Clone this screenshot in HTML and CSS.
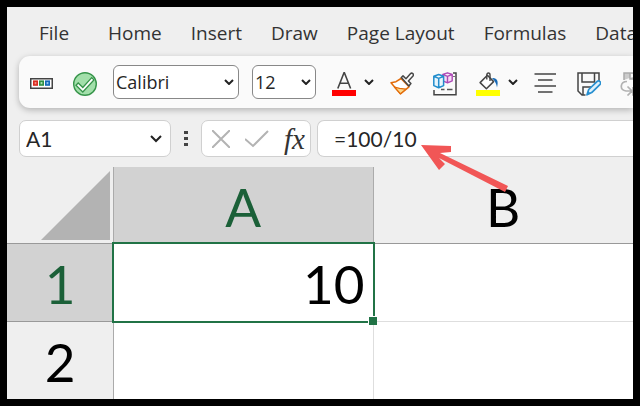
FILE: index.html
```
<!DOCTYPE html>
<html lang="en">

<head>
  <meta charset="UTF-8">
  <meta name="viewport" content="width=device-width, initial-scale=1.0">
  <title>Spreadsheet</title>

  <link rel="stylesheet" href="styles.css">
</head>

<body>
  <nav class="tabs">
    <a class="tab tab-file" href="#">File</a>
    <a class="tab" href="#">Home</a>
    <a class="tab" href="#">Insert</a>
    <a class="tab" href="#">Draw</a>
    <a class="tab" href="#">Page Layout</a>
    <a class="tab" href="#">Formulas</a>
    <a class="tab" href="#">Data</a>
  </nav>

  <div class="toolbar">
    <div class="group">
      <button class="tool" aria-label="Controls">
        <svg class="icon" viewBox="0 0 24 24">
          <rect x="0.75" y="6.75" width="21.5" height="9.5" fill="#fff" stroke="#444" stroke-width="1.5" />
          <rect x="3.8" y="9.2" width="3.4" height="3.8" fill="#f58b80" stroke="#d92c20" stroke-width="1.6" />
          <rect x="9.8" y="9.2" width="3.4" height="3.8" fill="#a6dcae" stroke="#2e8f43" stroke-width="1.6" />
          <rect x="15.8" y="9.2" width="3.4" height="3.8" fill="#8fc5ef" stroke="#1468b8" stroke-width="1.6" />
        </svg>
      </button>
      <button class="tool" aria-label="Accept">
        <svg class="icon" viewBox="0 0 24 24">
          <circle cx="12" cy="12" r="11.3" fill="#a2dfaa" stroke="#36944a" stroke-width="1.4" />
          <path d="M3 13.2l2.2-2.2 4.6 4.5L18.7 5.6l2.2 2.3L9.8 20z" fill="#fff" stroke="#36944a" stroke-width="1.3" />
        </svg>
      </button>
    </div>

    <div class="group group-fonts">
      <div class="picker picker-font">
        <select aria-label="Font">
          <option>Calibri</option>
        </select>
        <svg class="chevron" viewBox="0 0 10 6"><path d="M1 1l4 4 4-4" /></svg>
      </div>
      <div class="picker picker-size">
        <select aria-label="Font size">
          <option>12</option>
        </select>
        <svg class="chevron" viewBox="0 0 10 6"><path d="M1 1l4 4 4-4" /></svg>
      </div>
    </div>

    <button class="tool tool-menu" aria-label="Font color">
      <svg class="icon" viewBox="0 0 24 24">
        <path d="M5.8 16.5L12 .8h.4l6.2 15.7M8 11.2h8.4" fill="none" stroke="#444" stroke-width="1.6" />
        <path d="M0 18h24v6H0z" fill="#f00" />
      </svg>
      <svg class="chevron" viewBox="0 0 10 6"><path d="M1 1l4 4 4-4" /></svg>
    </button>

    <div class="group">
      <button class="tool" aria-label="Format painter">
        <svg class="icon" viewBox="0 0 24 24">
          <path d="M1 10.7l5-1 5-3.2 8 8.3-8.6 7z" fill="#fff" stroke="#e36c0a" stroke-width="1.5" stroke-linejoin="round" />
          <path d="M4.4 15l5.2 1.3 6.3.8-5.4 4.7z" fill="#fbd88c" stroke="#e36c0a" stroke-width="1.2" stroke-linejoin="round" />
          <path d="M11.3 5.5l1.7-1.6 3 2.9 4.4-5c1.5-1.7 4 .4 2.6 2.2l-4.6 4.9 2.5 2.7-2 2.4z" fill="#fff" stroke="#484848" stroke-width="1.5" stroke-linejoin="round" />
        </svg>
      </button>
      <button class="tool" aria-label="Group objects">
        <svg class="icon" viewBox="0 0 24 24">
          <path d="M20 1h3v21.7H1V18M21 4v1" fill="none" stroke="#444" stroke-width="1.5" />
          <path d="M8 17.5h3.5m2.5 0h5.5" fill="none" stroke="#555" stroke-width="1.3" />
          <path d="M14.5.8l4.7 1.6v6.4l-4.7 2-4.7-2V2.4zM9.8 2.4l4.7 1.9 4.7-1.9M14.5 4.3v6.5" fill="#f4dff5" stroke="#ad49b6" stroke-width="1.4" stroke-linejoin="round" />
          <path d="M5.7 2.5l4.9 1.8v9.3l-4.9 2.2-4.9-2.2V4.3zM.8 4.3l4.9 2.1 4.9-2.1M5.7 6.4v9.4" fill="#e8f5fd" stroke="#228dcc" stroke-width="1.5" stroke-linejoin="round" />
        </svg>
      </button>
      <button class="tool tool-menu" aria-label="Fill color">
        <svg class="icon" viewBox="0 0 24 24">
          <path d="M4.1 10.6l7.3-7.3 6.2 6.3-7.2 7.1z" fill="#fff" stroke="#444" stroke-width="1.5" stroke-linejoin="round" />
          <path d="M10.8 7.4V3c0-2.7 3.2-2.7 3.2 0v6" fill="none" stroke="#444" stroke-width="1.4" />
          <path d="M16 6c5-.6 6.8 3 5 9.4-.5-3-1.2-5.2-5-9.4z" fill="#1769b5" />
          <path d="M0 18h24v6H0z" fill="#ff0" />
        </svg>
        <svg class="chevron" viewBox="0 0 10 6"><path d="M1 1l4 4 4-4" /></svg>
      </button>
    </div>

    <div class="group">
      <button class="tool" aria-label="Center">
        <svg class="icon" viewBox="0 0 24 24">
          <path d="M.5 2h21.500M4 8h14.500M.5 14h21.500M4 20h14.500" fill="none" stroke="#444" stroke-width="1.5" />
        </svg>
      </button>
      <button class="tool" aria-label="Save as">
        <svg class="icon" viewBox="0 0 24 24">
          <path d="M22 9.5V1H1v18l4 4h3.5M5 1v9h12.5V1M6 22.5V15h8" fill="none" stroke="#444" stroke-width="1.5" />
          <path d="M10 22.8l1.7-5.3 8.5-8.2c1.7-1.5 4.5 1 2.9 3l-8.4 8.3z" fill="#dff1fc" stroke="#278fd0" stroke-width="1.7" stroke-linejoin="round" />
          <path d="M10 22.8l1.2-3.7 2.4 2.3z" fill="#278fd0" />
        </svg>
      </button>
      <button class="tool" aria-label="Repeat" disabled>
        <svg class="icon" viewBox="0 0 24 24">
          <path d="M4 8V1h20M10 1v6h14" fill="#ccc" stroke="#aaa" stroke-width="1.5" />
          <path d="M7 9.5c-7 0-7.8 8.500-1 9.500h5M7.500 14.500l4.500 4.500-4.500 4.500M13 15v8h10" fill="none" stroke="#b2b2b2" stroke-width="1.7" />
        </svg>
      </button>
    </div>
  </div>

  <div class="formula-bar">
    <div class="name-box">
      <input type="text" value="A1" aria-label="Name box">
      <button class="tool" aria-label="Show names">
        <svg class="chevron chevron-large" viewBox="0 0 12 8"><path d="M1 1l5 5 5-5" /></svg>
      </button>
    </div>
    <svg class="handle" viewBox="0 0 4 16">
      <path d="M0 0h4v3H0zM0 6h4v3H0zM0 12h4v3H0z" fill="#444" />
    </svg>
    <div class="actions">
      <button class="tool" aria-label="Cancel">
        <svg class="mark" viewBox="0 0 18 18"><path d="M0 0l18 18M18 0L0 18" /></svg>
      </button>
      <button class="tool" aria-label="Enter">
        <svg class="mark mark-check" viewBox="0 0 24 18"><path d="M0 9l8 7L23 1" /></svg>
      </button>
      <button class="tool fx" aria-label="Insert function">fx</button>
    </div>
    <input class="formula" type="text" value="=100/10" aria-label="Formula">
  </div>

  <table class="sheet">
    <thead>
      <tr>
        <th class="corner">
          <svg class="corner-mark" viewBox="0 0 69 69"><path d="M69 0v69H0z" fill="#b3b3b3" /></svg>
        </th>
        <th class="col active" scope="col">A</th>
        <th class="col" scope="col">B</th>
      </tr>
    </thead>
    <tbody>
      <tr>
        <th class="row active" scope="row">1</th>
        <td class="selected">10</td>
        <td></td>
      </tr>
      <tr>
        <th class="row" scope="row">2</th>
        <td></td>
        <td></td>
      </tr>
    </tbody>
  </table>

  <svg class="pointer" viewBox="0 0 88 50">
    <path d="M0 0l30 1v6l-11 1 68 33-3 6-66-34 6 6-6 6z" fill="#f15656" />
  </svg>
</body>

</html>
```
FILE: styles.css
```
* {
  margin: 0;
  padding: 0;
  box-sizing: border-box;
}

body {
  display: flex;
  flex-direction: column;
  position: relative;
  height: 100vh;
  border: 7px solid #000;
  background-color: #efefef;
  overflow: hidden;
  font-family: "Open Sans", "Noto Sans", sans-serif;
  color: #262626;
}

input,
select,
button {
  font: inherit;
  color: inherit;
  border: none;
  outline: none;
  background: none;
}

/* ribbon tabs */
.tabs {
  display: flex;
  gap: 29px;
  padding: 12px 0 9px 32px;
}

.tab {
  font-size: 19px;
  line-height: 28px;
  color: #333;
  text-decoration: none;
  white-space: nowrap;
}

.tab-file {
  margin-right: 10px;
}

/* toolbar */
.toolbar {
  display: flex;
  align-items: center;
  gap: 16px;
  height: 52px;
  flex-shrink: 0;
  margin-left: 12px;
  padding-left: 11px;
  background-color: #fafafa;
  border-radius: 11px 0 0 11px;
  box-shadow: 0 2px 6px rgba(0, 0, 0, 0.25);
}

.group {
  display: flex;
  align-items: center;
  gap: 19px;
}

.group-fonts {
  gap: 13px;
}

.tool {
  display: flex;
  align-items: center;
  flex-shrink: 0;
}

.tool-menu {
  gap: 8px;
}

.icon {
  display: block;
  width: 24px;
  height: 24px;
  margin-top: 4px;
}

.chevron {
  width: 10px;
  height: 6px;
  fill: none;
  stroke: #222;
  stroke-width: 2;
}

.picker {
  display: flex;
  align-items: center;
  height: 34px;
  padding: 0 4px 0 2px;
  background-color: #fff;
  border: 1px solid #888;
  border-radius: 6px;
}

.picker select {
  appearance: none;
  flex: 1;
  min-width: 0;
  font-size: 18px;
}

.picker-font {
  width: 126px;
}

.picker-size {
  width: 64px;
}

/* formula bar */
.formula-bar {
  display: flex;
  align-items: center;
  height: 37px;
  flex-shrink: 0;
  margin: 12px 0 10px 12px;
  font-family: Lato, sans-serif;
  font-size: 21px;
}

.name-box,
.actions,
.formula {
  height: 37px;
  background-color: #fff;
  border: 1px solid #d0d0d0;
  border-radius: 7px;
}

.name-box {
  display: flex;
  align-items: center;
  width: 152px;
  padding: 0 8px 0 6px;
}

.name-box input {
  flex: 1;
  min-width: 0;
}

.chevron-large {
  width: 12px;
  height: 8px;
}

.handle {
  width: 4px;
  height: 16px;
  margin: 0 13px;
}

.actions {
  display: flex;
  align-items: center;
  gap: 15px;
  width: 110px;
  margin-right: 6px;
  padding: 0 8px 0 10px;
}

.mark {
  width: 18px;
  height: 18px;
  fill: none;
  stroke: #b3b3b3;
  stroke-width: 2;
}

.mark-check {
  width: 24px;
}

.fx {
  font: italic 29px/30px "Liberation Serif", serif;
  color: #333;
}

.formula {
  flex: 1;
  min-width: 0;
  padding-left: 16px;
  border-right: none;
  border-radius: 7px 0 0 7px;
}

/* sheet */
.sheet {
  width: 100%;
  flex: 1;
  table-layout: fixed;
  border-collapse: separate;
  border-spacing: 0;
  font-family: Lato, sans-serif;
  font-size: 53px;
  line-height: 64px;
  color: #000;
}

.sheet th {
  font-weight: normal;
  border-right: 1px solid #ababab;
  border-bottom: 1px solid #999;
}

.sheet td {
  height: 78px;
  background-color: #fff;
  border-right: 1px solid #dedede;
  border-bottom: 1px solid #dedede;
  text-align: right;
}

.sheet tr > :last-child {
  border-right: none;
}

.sheet tbody tr:last-child > * {
  border-bottom: none;
}

.sheet .corner {
  width: 107px;
  height: 77px;
  padding: 0 3px 3px 0;
  text-align: right;
  vertical-align: bottom;
}

.corner-mark {
  display: block;
  width: 69px;
  height: 69px;
  margin-left: auto;
}

.sheet .col {
  padding-top: 4px;
}

.sheet .row {
  padding-top: 2px;
}

.sheet .active {
  background-color: #d2d2d2;
  color: #1b6038;
}

.sheet .selected {
  position: relative;
  padding: 2px 8px 0 0;
}

/* selection frame and its fill handle */
.selected::before {
  content: "";
  position: absolute;
  inset: -2px;
  border: 2px solid #217346;
}

.selected::after {
  content: "";
  position: absolute;
  right: -4px;
  bottom: -4px;
  width: 8px;
  height: 8px;
  background-color: #217346;
  border: solid #fff;
  border-width: 1px 0 0 1px;
}

.pointer {
  position: absolute;
  left: 414px;
  top: 138px;
  width: 88px;
  height: 50px;
}
```
